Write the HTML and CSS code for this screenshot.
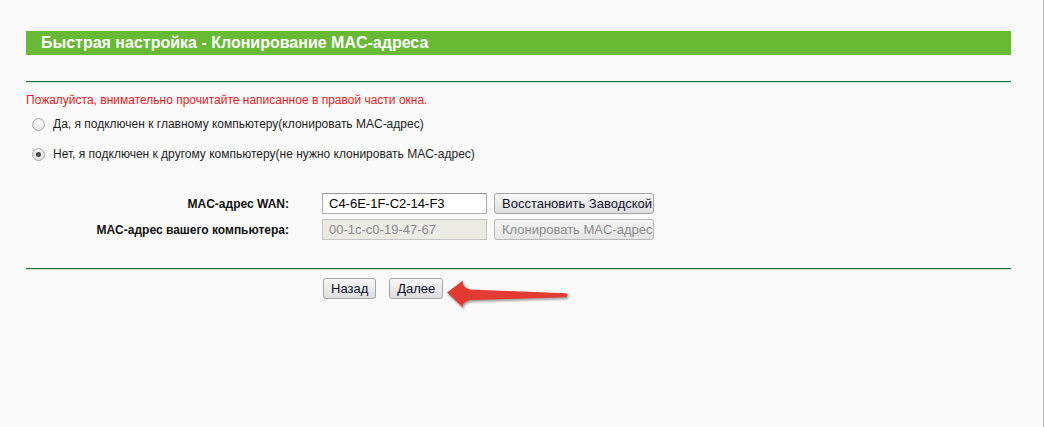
FILE: index.html
```html
<!DOCTYPE html>
<html lang="ru">
<head>
<meta charset="utf-8">
<title>Быстрая настройка - Клонирование MAC-адреса</title>
<link rel="stylesheet" href="styles.css">
</head>
<body>
<div class="page">
  <div class="panel">
    <div class="title">Быстрая настройка - Клонирование MAC-адреса</div>
    <div class="rule rule-top"></div>
    <p class="notice">Пожалуйста, внимательно прочитайте написанное в правой части окна.</p>
    <label class="opt opt-first"><span class="radio"></span>Да, я подключен к главному компьютеру(клонировать MAC-адрес)</label>
    <label class="opt opt-second"><span class="radio checked"></span>Нет, я подключен к другому компьютеру(не нужно клонировать MAC-адрес)</label>
    <div class="fields">
      <span class="lbl">MAC-адрес WAN:</span>
      <input class="txt" type="text" value="C4-6E-1F-C2-14-F3">
      <button class="btn btn-cut" type="button">Восстановить Заводской</button>
      <span class="lbl">MAC-адрес вашего компьютера:</span>
      <input class="txt" type="text" value="00-1c-c0-19-47-67" disabled>
      <button class="btn btn-cut" type="button" disabled>Клонировать MAC-адрес</button>
    </div>
    <div class="rule rule-bottom"></div>
    <div class="nav">
      <button class="btn" type="button">Назад</button>
      <button class="btn" type="button">Далее</button>
      <svg class="arrow" width="130" height="36" viewBox="0 0 130 36">
        <path d="M2 14.5 L18 2.5 Q16.5 9 25 11.5 L121 15.3 Q124.5 17.2 121 19.2 L25 22.2 Q16.5 24 18 29.5 Z" fill="#e33b31"/>
      </svg>
    </div>
  </div>
</div>
</body>
</html>
```
FILE: styles.css
```css
html, body {
  margin: 0;
  padding: 0;
  background: #ffffff;
  overflow: hidden;
}

body {
  font-family: "Liberation Sans", Arial, sans-serif;
  font-size: 12px;
  color: #000;
}

.page {
  box-sizing: border-box;
  width: 1044px;
  height: 427px;
  background: #fafafa;
  border-right: 1px solid #b3b3b3;
  padding-top: 31px;
}

.panel {
  margin-left: 26px;
  width: 985px;
}

.title {
  height: 24px;
  line-height: 24px;
  background: #68b934;
  color: #ffffff;
  font-weight: bold;
  font-size: 16px;
  padding-left: 15px;
}

.rule {
  height: 0;
  border-top: 1px solid #246a40;
  border-bottom: 1px solid #d3e4d7;
}

.rule-top {
  margin-top: 26px;
}

.notice {
  margin: 10px 0 0 0;
  line-height: 14px;
  color: #ee1c25;
}

.opt {
  display: flex;
  align-items: center;
  line-height: 14px;
  height: 14px;
  color: #1e1e1e;
  padding-left: 6px;
}

.opt-first {
  margin-top: 10px;
}

.opt-second {
  margin-top: 16px;
}

.radio {
  box-sizing: border-box;
  width: 13px;
  height: 13px;
  border-radius: 50%;
  border: 1px solid #a8a8a8;
  background: radial-gradient(circle at 50% 35%, #fdfdfd 0%, #e6e6e6 70%, #d8d8d8 100%);
  margin-right: 8px;
  display: flex;
  align-items: center;
  justify-content: center;
}

.radio.checked::after {
  content: "";
  width: 5px;
  height: 5px;
  border-radius: 50%;
  background: #4a4a4a;
}

.fields {
  margin-top: 32px;
  display: grid;
  grid-template-columns: 296px 165px 167px;
  grid-auto-rows: 21px;
  row-gap: 5px;
  align-items: center;
}

.lbl {
  box-sizing: border-box;
  padding-right: 33px;
  font-weight: bold;
  text-align: right;
  color: #111;
}

.txt {
  box-sizing: border-box;
  height: 21px;
  width: 165px;
  margin: 0;
  border: 1px solid #acacac;
  border-top-color: #9a9a9a;
  background: #ffffff;
  padding: 0 6px;
  font-family: "Liberation Sans", Arial, sans-serif;
  font-size: 13px;
  color: #000;
  outline: none;
}

.txt:disabled {
  background: #ebebe4;
  border-color: #c4c4c4;
  color: #8a8a8a;
}

.btn {
  box-sizing: border-box;
  height: 21px;
  margin: 0;
  padding: 0 7px;
  border: 1px solid #a6a6a6;
  border-radius: 3px;
  background: linear-gradient(#f8f8f8, #dedede);
  font-family: "Liberation Sans", Arial, sans-serif;
  font-size: 13px;
  color: #10102a;
  line-height: 19px;
  white-space: nowrap;
  overflow: hidden;
}

.btn-cut {
  margin-left: 7px;
  width: 160px;
  text-align: left;
}

.btn:disabled {
  color: #8c8c8c;
  border-color: #b8b8b8;
  background: linear-gradient(#f6f6f6, #e4e4e4);
}

.rule-bottom {
  margin-top: 28px;
}

.nav {
  position: relative;
  margin-top: 8px;
  padding-left: 297px;
  display: flex;
  gap: 13px;
}

.arrow {
  position: absolute;
  left: 419px;
  top: 0;
  filter: drop-shadow(1px 2px 1.2px rgba(0, 0, 0, 0.35));
}
```
